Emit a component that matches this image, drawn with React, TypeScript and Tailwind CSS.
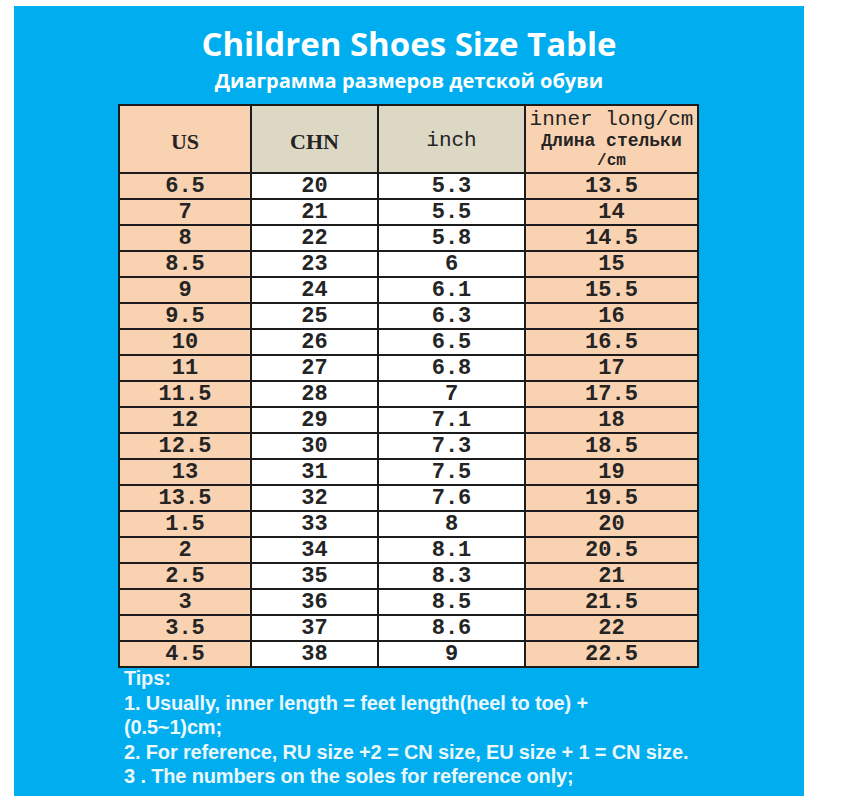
import React from "react";

// size rows: US, CHN, inch, inner length (cm)
const rows: [string, string, string, string][] = [
  ["6.5", "20", "5.3", "13.5"],
  ["7", "21", "5.5", "14"],
  ["8", "22", "5.8", "14.5"],
  ["8.5", "23", "6", "15"],
  ["9", "24", "6.1", "15.5"],
  ["9.5", "25", "6.3", "16"],
  ["10", "26", "6.5", "16.5"],
  ["11", "27", "6.8", "17"],
  ["11.5", "28", "7", "17.5"],
  ["12", "29", "7.1", "18"],
  ["12.5", "30", "7.3", "18.5"],
  ["13", "31", "7.5", "19"],
  ["13.5", "32", "7.6", "19.5"],
  ["1.5", "33", "8", "20"],
  ["2", "34", "8.1", "20.5"],
  ["2.5", "35", "8.3", "21"],
  ["3", "36", "8.5", "21.5"],
  ["3.5", "37", "8.6", "22"],
  ["4.5", "38", "9", "22.5"],
];

const tips = [
  "Tips:",
  "1. Usually, inner length = feet length(heel to toe) +",
  "(0.5~1)cm;",
  "2. For reference, RU size +2 = CN size, EU size + 1 = CN size.",
  "3 . The numbers on the soles for reference only;",
];

const SizeTable: React.FC = () => {
  return (
    <div className="ml-[104px] w-[581px] border-2 border-[#1c1c1c] bg-[#1c1c1c] grid grid-cols-[130px_125px_145px_171px] grid-rows-[66px_repeat(19,24px)] gap-[2px] font-['Liberation_Mono',monospace] text-[#242424]">
      {/* header */}
      <div className="bg-[#f9d2b2] flex items-center justify-center pt-[4px] font-['Liberation_Serif',serif] font-bold text-[22px]">
        US
      </div>
      <div className="bg-[#dcd8c4] flex items-center justify-center pt-[4px] font-['Liberation_Serif',serif] font-bold text-[22px]">
        CHN
      </div>
      <div className="bg-[#dcd8c4] flex items-center justify-center pt-[4px] text-[21px]">
        inch
      </div>
      <div className="bg-[#f9d2b2] flex flex-col items-center justify-center pt-[1px]">
        <span className="text-[21px] leading-[22px]">inner long/cm</span>
        <span className="text-[18px] leading-[21px] font-bold">Длина стельки</span>
        <span className="text-[16px] leading-[19px] font-bold">/cm</span>
      </div>

      {rows.map((r, i) => (
        <React.Fragment key={i}>
          <div className="bg-[#f9d2b2] flex items-center justify-center pt-[2px] text-[22px] leading-none font-bold">
            {r[0]}
          </div>
          <div className="bg-white flex items-center justify-center pt-[2px] text-[22px] leading-none font-bold">
            {r[1]}
          </div>
          <div className="bg-white flex items-center justify-center pt-[2px] text-[22px] leading-none font-bold">
            {r[2]}
          </div>
          <div className="bg-[#f9d2b2] flex items-center justify-center pt-[2px] text-[22px] leading-none font-bold">
            {r[3]}
          </div>
        </React.Fragment>
      ))}
    </div>
  );
};

export default function App() {
  return (
    <div className="w-[843px] h-[810px] bg-white pt-[6px] pl-[14px]">
      <div className="w-[790px] h-[790px] bg-[#00aeef] flex flex-col">
        <h1 className="mt-[17px] text-center text-white font-bold text-[33px] leading-[42px] font-['Open_Sans',sans-serif]">
          Children Shoes Size Table
        </h1>
        <p className="mt-[3px] text-center text-white font-bold text-[20px] leading-[26px] font-['Open_Sans',sans-serif]">
          Диаграмма размеров детской обуви
        </p>

        <div className="mt-[10px]">
          <SizeTable />
        </div>

        {/* tips under the table */}
        <div className="ml-[110px] -mt-[2px] text-[#eaf7fd] font-bold text-[20px] leading-[24.5px] tracking-[-0.15px] font-['Liberation_Sans',Arial,sans-serif]">
          {tips.map((t, i) => (
            <div key={i}>{t}</div>
          ))}
        </div>
      </div>
    </div>
  );
}
